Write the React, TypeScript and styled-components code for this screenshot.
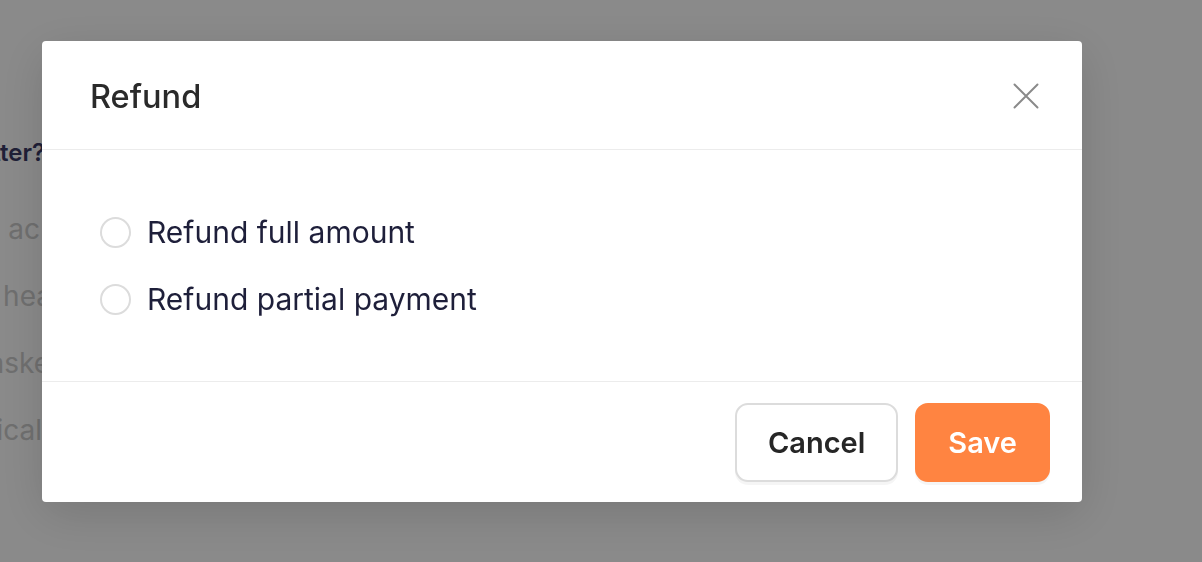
import { styled, createGlobalStyle } from "styled-components";

const GlobalStyle = createGlobalStyle`
  html, body {
    margin: 0;
    padding: 0;
    background: #ffffff;
    font-family: Inter, "Noto Sans", sans-serif;
  }
  * {
    box-sizing: border-box;
  }
`;

const Page = styled.div`
  width: 1202px;
  height: 562px;
  padding-top: 139px;
  display: flex;
  flex-direction: column;
  overflow: hidden;
`;

const Question = styled.div<{ $end: number }>`
  width: ${(p) => p.$end}px;
  display: flex;
  justify-content: flex-end;
  white-space: nowrap;
  font-size: 24px;
  line-height: 28px;
  font-weight: 600;
  color: #3a3a66;
  margin-bottom: 29px;
`;

const Answer = styled.div<{ $end: number }>`
  width: ${(p) => p.$end}px;
  display: flex;
  justify-content: flex-end;
  white-space: nowrap;
  font-size: 28px;
  line-height: 67px;
  color: #cdcdcd;
`;

const Overlay = styled.div`
  position: fixed;
  inset: 0;
  background: rgba(0, 0, 0, 0.46);
  padding: 41px 0 0 42px;
`;

const Modal = styled.div`
  width: 1040px;
  background: #ffffff;
  border-radius: 4px;
  box-shadow: 0 12px 48px rgba(0, 0, 0, 0.14);
  display: flex;
  flex-direction: column;
`;

const Header = styled.div`
  height: 109px;
  padding: 2px 42px 0 48px;
  display: flex;
  align-items: center;
  justify-content: space-between;
  border-bottom: 1.5px solid #ececec;
`;

const Title = styled.h2`
  margin: 0;
  font-size: 32.5px;
  font-weight: 500;
  color: #2a2a2a;
`;

const CloseButton = styled.button`
  width: 28px;
  height: 28px;
  padding: 0;
  border: none;
  background: transparent;
  color: #8a8a8a;
  display: flex;
  align-items: center;
  justify-content: center;
  cursor: pointer;
`;

const Body = styled.div`
  padding: 62px 58px 62px;
  display: flex;
  flex-direction: column;
  gap: 27px;
`;

const Option = styled.label`
  height: 40px;
  display: flex;
  align-items: center;
  gap: 16px;
  font-size: 30px;
  color: #1e1f3a;
  cursor: pointer;
`;

const Radio = styled.span<{ $checked?: boolean }>`
  width: 31px;
  height: 31px;
  border-radius: 50%;
  border: 2px solid ${(p) => (p.$checked ? "#ff8441" : "#dcdcdc")};
  background: #ffffff;
  flex-shrink: 0;
`;

const Footer = styled.div`
  border-top: 1.5px solid #ececec;
  padding: 21px 32px 20px;
  display: flex;
  justify-content: flex-end;
  gap: 17px;
`;

const Button = styled.button<{ $primary?: boolean }>`
  height: 79px;
  padding: 0 31px;
  border-radius: 13px;
  font-family: Inter, "Noto Sans", sans-serif;
  font-size: 29px;
  font-weight: 600;
  cursor: pointer;
  border: 2px solid ${(p) => (p.$primary ? "#ff8441" : "#dcdcdc")};
  background: ${(p) => (p.$primary ? "#ff8441" : "#ffffff")};
  color: ${(p) => (p.$primary ? "#ffffff" : "#262626")};
  box-shadow: 0 3px 0 rgba(0, 0, 0, 0.04);
`;

const options = ["Refund full amount", "Refund partial payment"];

export default function App() {
  return (
    <>
      <GlobalStyle />
      <Page>
        <Question $end={45}>Which plan is better?</Question>
        <Answer $end={40}>Yes, we ac</Answer>
        <Answer $end={52}>Ask your hea</Answer>
        <Answer $end={50}>Frequently aske</Answer>
        <Answer $end={42}>Technical</Answer>
      </Page>
      <Overlay>
        <Modal>
          <Header>
            <Title>Refund</Title>
            <CloseButton aria-label="Close">
              <svg width="26" height="26" viewBox="0 0 26 26" fill="none">
                <path
                  d="M1.5 1.5L24.5 24.5M24.5 1.5L1.5 24.5"
                  stroke="currentColor"
                  strokeWidth="2"
                  strokeLinecap="round"
                />
              </svg>
            </CloseButton>
          </Header>
          <Body>
            {options.map((label) => (
              <Option key={label}>
                <Radio />
                {label}
              </Option>
            ))}
          </Body>
          <Footer>
            <Button>Cancel</Button>
            <Button $primary>Save</Button>
          </Footer>
        </Modal>
      </Overlay>
    </>
  );
}
